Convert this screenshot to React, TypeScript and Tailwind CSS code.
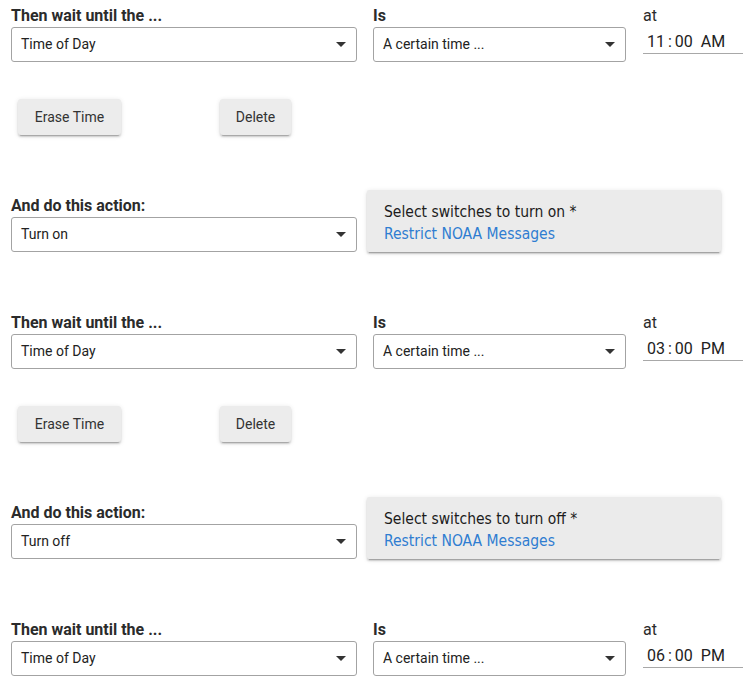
import React from "react";

const roboto = { fontFamily: "Roboto, 'Liberation Sans', Arial, sans-serif" };

function Arrow() {
  return (
    <svg width="10" height="5" viewBox="0 0 10 5" className="block">
      <path d="M0 0 L10 0 L5 5 Z" fill="#333333" />
    </svg>
  );
}

function Select({ value, width }: { value: string; width: string }) {
  return (
    <div
      className={`${width} h-[35px] box-border border border-[#a3a3a3] rounded-[3px] bg-white flex items-center justify-between pl-[9px] pr-[10px] text-[14px] text-[#222]`}
    >
      <span>{value}</span>
      <Arrow />
    </div>
  );
}

function Label({ children, bold = true }: { children: React.ReactNode; bold?: boolean }) {
  return (
    <div className={`text-[16px] leading-[19px] mb-[2px] text-[#2b2b2b] ${bold ? "font-bold" : "font-normal"}`}>
      {children}
    </div>
  );
}

function Button({ children, width }: { children: React.ReactNode; width: string }) {
  return (
    <div
      className={`${width} h-[36px] flex items-center justify-center rounded-[3px] bg-[#ececec] text-[14px] text-[#333] shadow-[0_2px_2px_rgba(0,0,0,0.14),0_3px_1px_-2px_rgba(0,0,0,0.2),0_1px_5px_rgba(0,0,0,0.12)]`}
    >
      {children}
    </div>
  );
}

function TimeBlock({ hh, ampm, buttons = true }: { hh: string; ampm: string; buttons?: boolean }) {
  return (
    <div>
      <div className="flex items-start pt-[6px] pl-[11px]">
        <div className="w-[346px]">
          <Label>Then wait until the ...</Label>
          <Select value="Time of Day" width="w-[346px]" />
        </div>
        <div className="ml-[16px] w-[253px]">
          <Label>Is</Label>
          <Select value="A certain time ..." width="w-[253px]" />
        </div>
        <div className="ml-[17px] flex-1">
          <Label bold={false}>at</Label>
          <div className="h-[27px] box-border border-b border-[#a8a8a8] pt-[5px] pl-[4px] text-[16px] leading-[19px] text-[#222] flex whitespace-nowrap">
            <span>{hh}</span>
            <span className="mx-[3px]">:</span>
            <span>00</span>
            <span className="ml-[8px]">{ampm}</span>
          </div>
        </div>
      </div>
      {buttons && (
        <div className="flex mt-[37px] pl-[18px]">
          <Button width="w-[103px]">Erase Time</Button>
          <div className="ml-[99px]">
            <Button width="w-[71px]">Delete</Button>
          </div>
        </div>
      )}
    </div>
  );
}

function ActionBlock({ action, what }: { action: string; what: string }) {
  return (
    <div className="flex items-end mt-[55px] pl-[11px]">
      <div className="w-[346px]">
        <Label>And do this action:</Label>
        <Select value={action} width="w-[346px]" />
      </div>
      <div
        className="ml-[10px] w-[354px] h-[62px] box-border rounded-[2px] bg-[#ebebeb] pl-[17px] pt-[11px] text-[15.5px] leading-[22px] font-stretch-condensed shadow-[0_2px_2px_rgba(0,0,0,0.14),0_3px_1px_-2px_rgba(0,0,0,0.2),0_1px_5px_rgba(0,0,0,0.12)]"
        style={{ fontFamily: "'DejaVu Sans Condensed', 'DejaVu Sans', Verdana, sans-serif" }}
      >
        <div className="text-[#1c1c1c]">{what}</div>
        <div className="text-[#2f7dd1]">Restrict NOAA Messages</div>
      </div>
    </div>
  );
}

export default function App() {
  return (
    <div className="w-[743px] h-[682px] overflow-hidden bg-white" style={roboto}>
      <TimeBlock hh="11" ampm="AM" />
      <ActionBlock action="Turn on" what="Select switches to turn on *" />
      <div className="mt-[55px]">
        <TimeBlock hh="03" ampm="PM" />
      </div>
      <ActionBlock action="Turn off" what="Select switches to turn off *" />
      <div className="mt-[55px]">
        <TimeBlock hh="06" ampm="PM" buttons={false} />
      </div>
    </div>
  );
}
